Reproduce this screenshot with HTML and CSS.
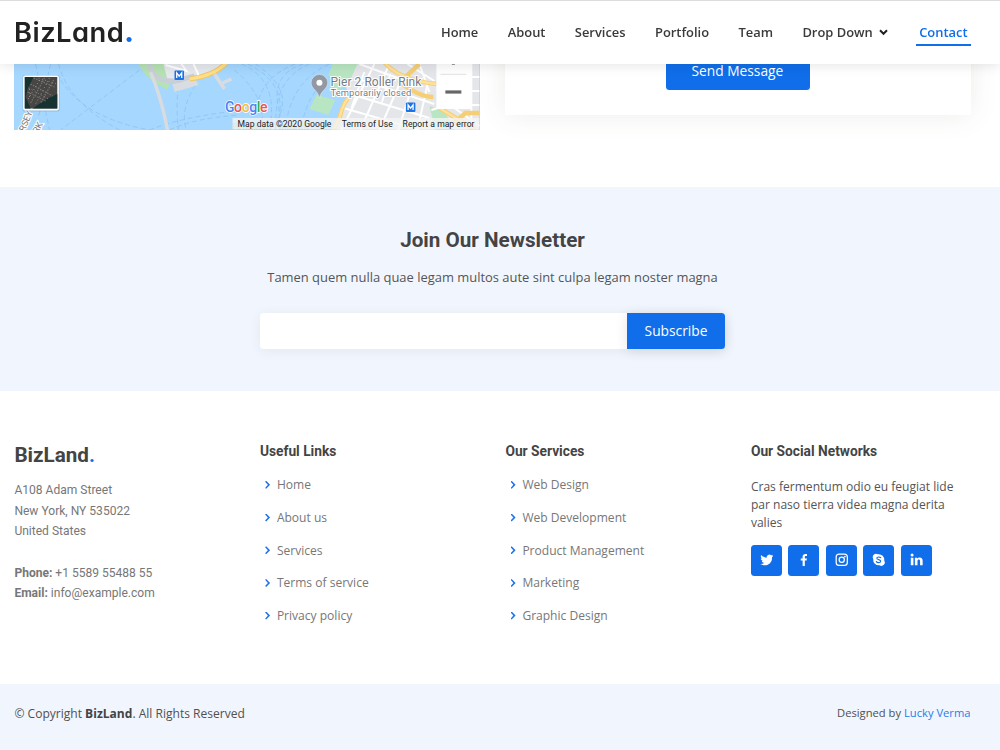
FILE: index.html
```html
<!DOCTYPE html>
<html lang="en">
<head>
<meta charset="utf-8">
<title>BizLand</title>
<link rel="stylesheet" href="styles.css">
</head>
<body>
<header class="header">
  <a class="logo">BizLand<span class="dot">.</span></a>
  <nav class="nav">
    <a>Home</a><a>About</a><a>Services</a><a>Portfolio</a><a>Team</a>
    <a class="drop">Drop Down <svg width="9" height="7" viewBox="0 0 9 7"><path d="M1 1.3 4.5 4.8 8 1.3" fill="none" stroke="#222" stroke-width="2"/></svg></a>
    <a class="active">Contact</a>
  </nav>
</header>
<main>
  <section class="contact">
    <svg class="map" viewBox="14.4 0 465.6 129.5" preserveAspectRatio="none">
      <rect x="14" width="467" height="130" fill="#a5d7ff"/>
      <g fill="none" stroke="#8dc1f3" stroke-width=".8" stroke-dasharray="5 3">
        <path d="M36 64 50 130M51 64 36 130M59 64Q68 102 120 130M61 80Q85 118 150 130M140 70 61 130M186 64Q174 90 179 130M196 85Q180 110 187 130M170 130Q195 118 240 115M150 130Q180 118 228 112"/>
        <path d="M242 64Q280 80 270 130M248 64Q293 85 276 130M256 64Q302 95 270 130M310 64Q272 80 277 130M304 64Q268 75 281 116M330 64Q290 82 286 130M296 64Q262 77 258 106M235 70Q270 100 261 130M340 70Q306 90 302 130"/>
      </g>
      <path d="M139 64Q145 78 168 90L171 80 205 64Z" fill="#b6e2b4"/>
      <path d="M164 64 168 80 188 82 205 77 226 64Z" fill="#e5e8ed"/>
      <path d="M173 84 196 79 199 85 175 92Z" fill="#d9dde2"/>
      <path d="M150 64Q152 82 176 81L195 76" fill="none" stroke="#c9cfd6" stroke-width="5"/>
      <path d="M151 72Q162 98 168 130" fill="none" stroke="#d8dce0" stroke-width="3.5"/>
      <path d="M190 79Q214 76 227 63" fill="none" stroke="#f0c765" stroke-width="5"/>
      <path d="M190 79Q214 76 227 63" fill="none" stroke="#ffdf8a" stroke-width="3"/>
      <path d="M166 65 187 71 182 64M194 64 199 75" fill="none" stroke="#fff" stroke-width="2"/>
      <path d="M215 74 225 89M221 84 232 79" fill="none" stroke="#d8dce0" stroke-width="3.5"/>
      <path d="M355 64 343 77 349 94 332 130H480V64Z" fill="#e4e6ea"/>
      <path d="M333 64H358L349 84 337 91 329 75Z" fill="#b9e6c2"/>
      <path d="M317 95 336 100 329 115 310 109Z" fill="#b9e6c2"/>
      <path d="M430 106 445 111 455 130H436Z" fill="#b9e6c2"/>
      <g fill="none" stroke="#fff" stroke-width="2">
        <path d="M360 64 420 86M356 78 435 104M351 94 430 118M344 108 420 130M375 64 342 130M390 64 361 130M401 82 380 130M414 82 399 130M428 85 418 130M408 64 435 81M420 64 430 92M391 74 382 104M365 72 352 108M432 110 465 100M440 64 470 82M472 64V130M480 77H465M480 91H465M480 105H465M455 108 480 126"/>
      </g>
      <path d="M383 60Q398 80 437 84M420 64 404 79M354 93Q344 100 340 118L334 130M400 82Q420 97 434 97M440 108 476 130M480 113 466 113 455 123" fill="none" stroke="#f6cf74" stroke-width="4.5"/>
      <path d="M383 60Q398 80 437 84M354 93Q344 100 340 118L334 130M440 108 476 130" fill="none" stroke="#ffe19b" stroke-width="2.5"/>
      <g class="map-street"><text transform="translate(25 132) rotate(-68)">RSEY</text><text transform="translate(38 134) rotate(-60)">RK</text></g>
      <text x="233" y="131" class="map-area">Brooklyn Heights</text>
      <g><rect x="175" y="70.500" width="9.500" height="9.500" rx="1" fill="#1a73e8"/><rect x="406.500" y="102.500" width="9.500" height="9.500" rx="1" fill="#1a73e8"/><path d="M177.200 78v-5l2.500 3.200 2.500-3.200v5M408.700 110v-5l2.500 3.200 2.500-3.200v5" fill="none" stroke="#fff" stroke-width="1.300"/></g>
      <path d="M320 98C318.300 90 311.700 89 311.700 82.800a8.300 8.300 0 0 1 16.600 0C328.300 89 321.700 90 320 98Z" fill="#9299a3" stroke="#e8edf2" stroke-width=".5"/>
      <circle cx="320" cy="82.800" r="3" fill="#fff"/>
      <text x="331" y="86.300" class="map-place" textLength="91">Pier 2 Roller Rink</text>
      <text x="331" y="96.300" class="map-note" textLength="81">Temporarily closed</text>
      <text x="225.500" y="112.500" class="map-brand" textLength="42.500"><tspan fill="#4285f4">G</tspan><tspan fill="#ea5548">o</tspan><tspan fill="#f6bd32">o</tspan><tspan fill="#4285f4">g</tspan><tspan fill="#34a853">l</tspan><tspan fill="#ea5548">e</tspan></text>
      <rect x="233" y="118" width="247" height="11.500" fill="#f5f5f5" opacity=".78"/>
      <g class="map-legal"><text x="238" y="126.800" textLength="94">Map data ©2020 Google</text><text x="342.300" y="126.800" textLength="51">Terms of Use</text><text x="403.200" y="126.800" textLength="72">Report a map error</text></g>
      <rect x="437" y="50" width="34.500" height="59" rx="1.500" fill="#fff"/>
      <path d="M441 74.300H467" stroke="#e2e2e2"/><path d="M446 92H462" stroke="#666" stroke-width="3.200"/><path d="M452.500 64H455.500" stroke="#777" stroke-width="1.500"/>
      <rect x="23" y="75" width="37" height="36.500" rx="2" fill="#5d88ad" opacity=".35"/>
      <rect x="23.500" y="75.500" width="35.800" height="35" rx="2" fill="#fff"/>
      <rect x="25.200" y="77" width="32.500" height="31.500" fill="#474645"/>
      <path d="M25.200 77H34L28 89 26 97 31 108.500H25.200ZM57.700 94 47 99 38 105 33 108.500H57.700Z" fill="#173331"/>
      <path d="M34 78 55 87M31 84 53 96M28 92 46 101M45 78 31 103M54 80 41 103" stroke="#777370" stroke-width="1.200" stroke-dasharray="1.500 1.200"/>
      <path d="M39 78 57 84M29 88 49 99M50 78 36 104M30 89v9M40 80 28 100" stroke="#a39e99" stroke-width=".8" stroke-dasharray="1 2.500"/>
    </svg>
    <div class="form-card"><button class="send">Send Message</button></div>
  </section>
  <section class="newsletter">
    <h4>Join Our Newsletter</h4>
    <p>Tamen quem nulla quae legam multos aute sint culpa legam noster magna</p>
    <form class="subscribe"><input type="email" aria-label="Email"><button type="button">Subscribe</button></form>
  </section>
</main>
<footer>
  <div class="footer-top">
    <div class="brand">
      <h3>BizLand<span class="dot">.</span></h3>
      <p>A108 Adam Street<br>New York, NY 535022<br>United States<br><br><strong>Phone:</strong> +1 5589 55488 55<br><strong>Email:</strong> info@example.com</p>
    </div>
    <div class="links"><h4>Useful Links</h4><ul><li>Home</li><li>About us</li><li>Services</li><li>Terms of service</li><li>Privacy policy</li></ul></div>
    <div class="links"><h4>Our Services</h4><ul><li>Web Design</li><li>Web Development</li><li>Product Management</li><li>Marketing</li><li>Graphic Design</li></ul></div>
    <div class="social-col">
      <h4>Our Social Networks</h4>
      <p>Cras fermentum odio eu feugiat lide par naso tierra videa magna derita valies</p>
      <div class="social">
        <a aria-label="Twitter"><svg viewBox="0 0 24 24"><path d="M23.600 4.900c-.9.400-1.800.6-2.700.8 1-.6 1.700-1.500 2.100-2.600-.9.500-1.900.9-3 1.100A4.800 4.800 0 0 0 11.900 8.500C8 8.300 4.500 6.400 2.100 3.500c-1.300 2.200-.6 5 1.500 6.400-.8 0-1.500-.2-2.200-.6 0 2.300 1.600 4.300 3.900 4.800-.7.200-1.400.2-2.200.1.600 1.900 2.400 3.300 4.500 3.300A9.600 9.600 0 0 1 .5 19.500C13 26 22.500 17 21.200 7.400c.9-.7 1.800-1.500 2.400-2.500Z"/></svg></a>
        <a aria-label="Facebook"><svg viewBox="0 0 24 24"><path d="M13.900 23v-9.600h3.200l.5-3.800h-3.700V7.200c0-1.100.3-1.900 1.900-1.900h2V2c-.4 0-1.500-.2-2.900-.2-2.900 0-4.900 1.800-4.900 5v2.800H6.700v3.800H10V23Z"/></svg></a>
        <a aria-label="Instagram"><svg viewBox="0 0 24 24"><g fill="none" stroke="#fff" stroke-width="2.200"><rect x="2.100" y="2.100" width="19.800" height="19.800" rx="5.200"/><circle cx="12" cy="12" r="4.600"/></g><circle cx="17.700" cy="6.300" r="1.500"/></svg></a>
        <a aria-label="Skype"><svg viewBox="0 0 24 24"><path d="M7.200 1.200a6 6 0 0 1 3.300 1A10 10 0 0 1 21.800 13.500 6 6 0 0 1 13.500 21.800 10 10 0 0 1 2.200 10.500a6 6 0 0 1 5-9.300Z"/><path d="M15.600 8.500C14.800 6.800 9 6.100 8.500 9.200c-.3 3.200 7.300 2 6.900 5.500-.4 3.400-6.600 3.100-7.700.4" fill="none" stroke="#106eea" stroke-width="2" stroke-linecap="round"/></svg></a>
        <a aria-label="LinkedIn"><svg viewBox="0 0 24 24"><circle cx="3.700" cy="3.700" r="2.700"/><path d="M1.400 8.300h4.700v13.500H1.400ZM8.700 8.300h4.400v1.900c2-3.500 9.400-3.300 9.400 3.500v8.100h-4.600v-7.200c0-4.100-4.600-3.700-4.600 0v7.200H8.700Z"/></svg></a>
      </div>
    </div>
  </div>
  <div class="footer-bottom"><div>© Copyright <strong>BizLand</strong>. All Rights Reserved</div><div class="credits">Designed by <a>Lucky Verma</a></div></div>
</footer>
</body>
</html>
```
FILE: styles.css
```css
* { box-sizing: border-box; }
body { margin: 0; height: 750px; overflow: hidden; background: #fff; color: #444; font-family: "Open Sans", sans-serif; font-size: 13.78px; }
h3, h4, p, ul { margin: 0; padding: 0; }
button { border: 0; color: #fff; background: #106eea; font-family: "Open Sans", sans-serif; }
.dot { color: #106eea; }
.header { position: fixed; z-index: 5; top: 0; left: 0; right: 0; height: 64px; padding: 0 29.5px 0 14px; display: flex; align-items: center; justify-content: space-between; background: #fff; border-top: 1px solid #ddd; box-shadow: 0 0 13px rgba(0,0,0,.13); }
.logo { color: #222; font: 600 27.3px/38px Inter, sans-serif; font-feature-settings: "cv11"; letter-spacing: .5px; }
.logo .dot { font-weight: 800; }
.nav { display: flex; align-items: flex-start; gap: 29.4px; height: 27px; color: #3a3a3a; font-size: 12.92px; font-weight: 600; line-height: 26px; }
.drop { display: flex; align-items: center; gap: 6px; }
.nav .active { height: 27px; margin-left: -1px; padding: 0 3px; color: #106eea; border-bottom: 2px solid #106eea; }
.contact { height: 187px; padding: 0 29.5px 0 14.4px; display: flex; gap: 25.5px; align-items: flex-start; }
.map { width: 465.6px; height: 129.5px; }
.map text { font-family: Roboto, sans-serif; }
.map .map-street { font-size: 9px; fill: #777; stroke: #fff; stroke-width: 2px; paint-order: stroke; }
.map .map-area { font-size: 10px; font-weight: 500; fill: #83c597; }
.map .map-place { font-size: 12px; fill: #737b84; stroke: #fff; stroke-width: 2px; paint-order: stroke; }
.map .map-note { font-size: 9.5px; fill: #737b84; stroke: #fff; stroke-width: 2px; paint-order: stroke; }
.map .map-brand { font-size: 14px; font-weight: 500; stroke: #fff; stroke-width: 1.5px; paint-order: stroke; }
.map .map-legal { font-size: 8.6px; fill: #222; }
.form-card { width: 465.5px; height: 115px; padding-bottom: 25.5px; display: flex; align-items: flex-end; justify-content: center; background: #fff; box-shadow: 0 0 26px rgba(80,80,60,.1); }
.send { width: 144px; height: 38px; padding: 0 1px 0 0; border-radius: 3.5px; font-size: 13.78px; }
.newsletter { height: 204px; padding: 41px 15px 0 0; text-align: center; background: #f1f6fe; }
.newsletter h4 { font: 700 20.67px/25px Roboto, sans-serif; }
.newsletter p { margin-top: 14px; color: #555; font-size: 12.95px; line-height: 21px; }
.subscribe { width: 465.5px; height: 36.5px; margin: 24.5px auto 0; display: flex; border-radius: 3.5px; background: #fff; box-shadow: 0 2px 13px rgba(0,0,0,.06); }
.subscribe input { flex: 1; min-width: 0; border: 0; background: none; }
.subscribe button { width: 98.5px; padding: 0; border-radius: 0 3.5px 3.5px 0; font-size: 13.78px; box-shadow: 0 2px 13px rgba(0,0,0,.1); }
.footer-top { height: 293px; padding: 52px 15px 0 14.4px; display: grid; grid-template-columns: repeat(4, 245.5px); }
.brand h3 { font: 700 20.67px/25px Roboto, sans-serif; }
.brand p { margin-top: 12px; color: #777; font: 12.06px/20.67px Roboto, sans-serif; }
.footer-top h4 { color: #444; font: 700 13.78px/17px Roboto, sans-serif; }
.links ul { margin-top: 8.5px; list-style: none; color: #777; font-size: 12.06px; }
.links li { height: 32.7px; display: flex; align-items: center; gap: 6.8px; padding-left: 5.2px; }
.links li::before { content: ""; width: 5px; height: 8px; background: #1f72eb; clip-path: polygon(0 12%, 22% 0, 100% 50%, 22% 100%, 0 88%, 56% 50%); }
.social-col p { width: 220px; margin-top: 17.5px; color: #555; font-size: 12.06px; line-height: 18.1px; }
.social { display: flex; gap: 6.5px; margin-top: 13px; }
.social a { width: 31px; height: 31px; display: grid; place-items: center; border-radius: 3.5px; background: #106eea; }
.social svg { width: 13.5px; height: 13.5px; margin-top: -1px; fill: #fff; }
.footer-bottom { height: 66px; padding: 20px 29.5px 0 14.4px; display: flex; justify-content: space-between; background: #f1f6fe; color: #505050; font-size: 12.06px; line-height: 20px; }
.footer-bottom strong { color: #444; }
.credits { font-size: 11.2px; line-height: 17px; }
.credits a { color: #2a7aec; }
```
